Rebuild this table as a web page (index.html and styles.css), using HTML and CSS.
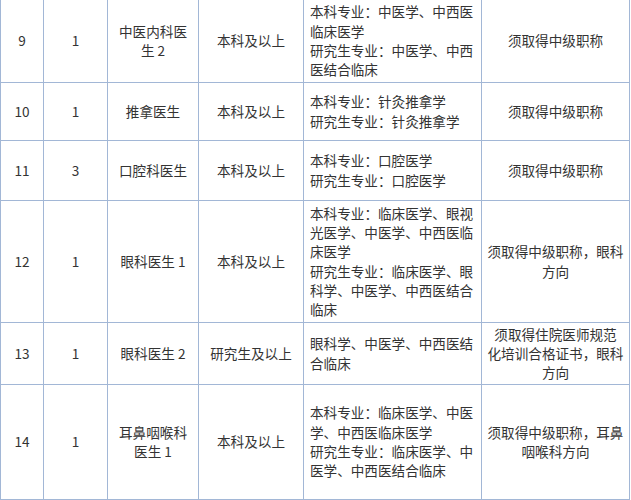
FILE: index.html
```html
<!DOCTYPE html>
<html lang="zh-CN">
<head>
<meta charset="utf-8">
<title>招聘岗位表</title>
<link rel="stylesheet" href="styles.css">
</head>
<body>
<div class="table">
  <div class="cell">9</div>
  <div class="cell">1</div>
  <div class="cell"><div>中医内科医<br>生 2</div></div>
  <div class="cell">本科及以上</div>
  <div class="cell left"><div>本科专业<span class="p">：</span>中医学、中西医<br>临床医学<br>研究生专业<span class="p">：</span>中医学、中西<br>医结合临床</div></div>
  <div class="cell">须取得中级职称</div>

  <div class="cell">10</div>
  <div class="cell">1</div>
  <div class="cell">推拿医生</div>
  <div class="cell">本科及以上</div>
  <div class="cell left"><div>本科专业<span class="p">：</span>针灸推拿学<br>研究生专业<span class="p">：</span>针灸推拿学</div></div>
  <div class="cell">须取得中级职称</div>

  <div class="cell">11</div>
  <div class="cell">3</div>
  <div class="cell">口腔科医生</div>
  <div class="cell">本科及以上</div>
  <div class="cell left"><div>本科专业<span class="p">：</span>口腔医学<br>研究生专业<span class="p">：</span>口腔医学</div></div>
  <div class="cell">须取得中级职称</div>

  <div class="cell">12</div>
  <div class="cell">1</div>
  <div class="cell">眼科医生 1</div>
  <div class="cell">本科及以上</div>
  <div class="cell left"><div>本科专业<span class="p">：</span>临床医学、眼视<br>光医学、中医学、中西医临<br>床医学<br>研究生专业<span class="p">：</span>临床医学、眼<br>科学、中医学、中西医结合<br>临床</div></div>
  <div class="cell"><div>须取得中级职称<span class="p">，</span>眼科<br>方向</div></div>

  <div class="cell">13</div>
  <div class="cell">1</div>
  <div class="cell">眼科医生 2</div>
  <div class="cell">研究生及以上</div>
  <div class="cell left"><div>眼科学、中医学、中西医结<br>合临床</div></div>
  <div class="cell"><div>须取得住院医师规范<br>化培训合格证书<span class="p">，</span>眼科<br>方向</div></div>

  <div class="cell">14</div>
  <div class="cell">1</div>
  <div class="cell"><div>耳鼻咽喉科<br>医生 1</div></div>
  <div class="cell">本科及以上</div>
  <div class="cell left"><div>本科专业<span class="p">：</span>临床医学、中医<br>学、中西医临床医学<br>研究生专业<span class="p">：</span>临床医学、中<br>医学、中西医结合临床</div></div>
  <div class="cell"><div>须取得中级职称<span class="p">，</span>耳鼻<br>咽喉科方向</div></div>
</div>
</body>
</html>
```

FILE: styles.css
```css
* {
  box-sizing: border-box;
}

html, body {
  margin: 0;
  padding: 0;
  background: #ffffff;
}

body {
  font-family: "Noto Sans CJK SC", "Microsoft YaHei", sans-serif;
  font-size: 13.6px;
  line-height: 19.3px;
  color: #333333;
}

.table {
  display: grid;
  grid-template-columns: 43px 64px 91px 105px 178px 148px;
  grid-template-rows: 83px 58px 60px 122px 62px 115px;
  width: 630px;
  margin-top: -1px;
  border-left: 1px solid #a2b7d6;
  border-top: 1px solid #a2b7d6;
}

.cell {
  display: flex;
  align-items: center;
  justify-content: center;
  text-align: center;
  padding: 0 5px;
  border-right: 1px solid #a2b7d6;
  border-bottom: 1px solid #a2b7d6;
  white-space: nowrap;
}

.cell.left {
  justify-content: flex-start;
  text-align: left;
  padding: 0 6px;
}

.p {
  font-family: "Noto Sans CJK TC", "Noto Sans CJK SC", sans-serif;
}
```
